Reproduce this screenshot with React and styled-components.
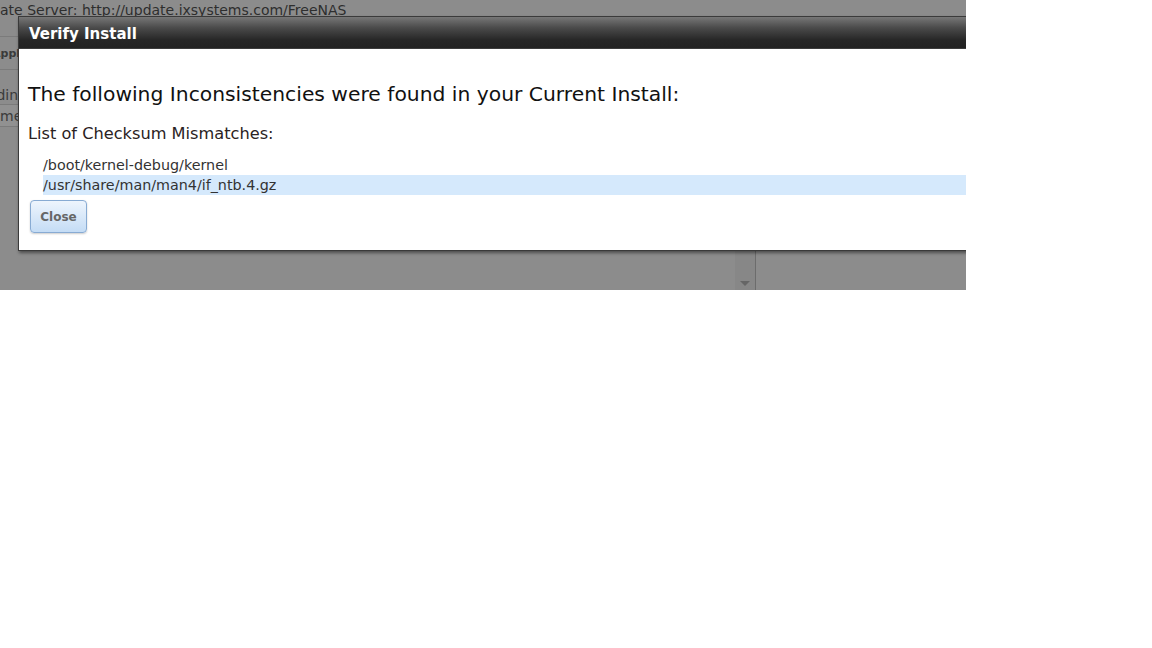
import React from 'react'
import styled, { createGlobalStyle } from 'styled-components'

const GlobalStyle = createGlobalStyle`
    body {
        margin: 0;
        background: #fff;
        font-family: "DejaVu Sans", Verdana, sans-serif;
    }
`;

const Screen = styled.div`
    position: relative;
    width: 966px;
    height: 290px;
    overflow: hidden;
    background-color: #8c8c8c;
    display: flex;
`;

const Main = styled.div`
    width: 735px;
    display: flex;
    flex-direction: column;
`;

const ServerLine = styled.div`
    height: 36px;
    margin-left: -28px;
    font-size: 14px;
    line-height: 20px;
    color: #2e2e2e;
    white-space: nowrap;
    border-bottom: 1px solid #7b7b7b;
`;

const Row = styled.div`
    height: ${props => props.h || 33}px;
    box-sizing: border-box;
    display: flex;
    align-items: ${props => props.bottom ? 'flex-end' : 'center'};
    padding-bottom: ${props => props.bottom ? 1 : 0}px;
    margin-left: ${props => props.shift || 0}px;
    font-size: ${props => props.size || 14}px;
    font-weight: ${props => props.bold ? 'bold' : 'normal'};
    white-space: nowrap;
    color: #3a3a3a;
    background: ${props => props.bg || 'transparent'};
    border-bottom: 1px solid #7b7b7b;
`;

const Scroller = styled.div`
    width: 20px;
    margin-top: auto;
    height: 40px;
    background-color: #878787;
    display: flex;
    align-items: flex-end;
    justify-content: center;
    padding-bottom: 4px;
    box-sizing: border-box;
`;

const Arrow = styled.div`
    width: 0;
    height: 0;
    border-left: 5px solid transparent;
    border-right: 5px solid transparent;
    border-top: 5px solid #666;
`;

const Side = styled.div`
    flex: 1;
    margin-top: auto;
    height: 40px;
    border-left: 1px solid #6c6c6c;
`;

const Dialog = styled.div`
    position: absolute;
    left: 18px;
    top: 16px;
    width: 1000px;
    height: 235px;
    box-sizing: border-box;
    background-color: #fff;
    border: 1px solid #3a3a3a;
    box-shadow: 1px 2px 3px rgba(0, 0, 0, 0.45);
    display: flex;
    flex-direction: column;
`;

const TitleBar = styled.div`
    height: 32px;
    box-sizing: border-box;
    padding: 2px 0 0 10px;
    display: flex;
    align-items: center;
    background: linear-gradient(#777 0%, #4a4a4a 35%, #262626 75%, #222 100%);
    border-bottom: 1px solid #3c3c3c;
    color: #fff;
    font-weight: bold;
    font-size: 15px;
`;

const Body = styled.div`
    padding: 0 9px;
`;

const Heading = styled.h2`
    margin: 33px 0 0;
    font-size: 20.3px;
    line-height: 24px;
    font-weight: normal;
    color: #111;
    white-space: nowrap;
`;

const Label = styled.p`
    margin: 18px 0 0;
    font-size: 16.2px;
    line-height: 20px;
    color: #2a2222;
`;

const FileList = styled.ul`
    list-style: none;
    margin: 11px 0 0;
    padding: 0 0 0 15px;
`;

const FileItem = styled.li`
    height: 20px;
    line-height: 20px;
    font-size: 14.3px;
    color: #333;
    background-color: ${props => props.selected ? '#d5e9fc' : 'transparent'};
`;

const CloseButton = styled.button`
    margin: 5px 0 0 2px;
    width: 57px;
    height: 33px;
    border: 1px solid #88abd3;
    border-radius: 4px;
    background: linear-gradient(#eef5fd, #c4dcf5);
    box-shadow: 0 1px 2px rgba(0, 0, 0, 0.2);
    font-family: "DejaVu Sans", Verdana, sans-serif;
    font-weight: bold;
    font-size: 12px;
    color: #666;
    cursor: pointer;
`;

const files = ['/boot/kernel-debug/kernel', '/usr/share/man/man4/if_ntb.4.gz'];

function App() {
    return (
        <>
            <GlobalStyle />
            <Screen>
                <Main>
                    <ServerLine>Update Server: http://update.ixsystems.com/FreeNAS</ServerLine>
                    <Row h={33} shift={-8} size={11} bold>Apply</Row>
                    <Row h={35} shift={-29} bottom>Pending</Row>
                    <Row h={22} shift={-19} bg="#919191">Name</Row>
                </Main>
                <Scroller><Arrow /></Scroller>
                <Side />
                <Dialog>
                    <TitleBar>Verify Install</TitleBar>
                    <Body>
                        <Heading>The following Inconsistencies were found in your Current Install:</Heading>
                        <Label>List of Checksum Mismatches:</Label>
                        <FileList>
                            {files.map((f, i) => (
                                <FileItem key={f} selected={i === 1}>{f}</FileItem>
                            ))}
                        </FileList>
                        <CloseButton>Close</CloseButton>
                    </Body>
                </Dialog>
            </Screen>
        </>
    );
}

export default App;
